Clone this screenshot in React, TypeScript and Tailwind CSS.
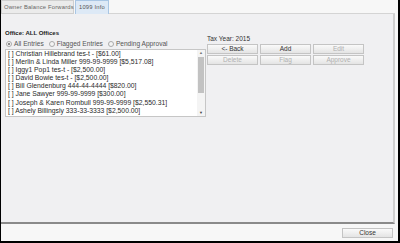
import React from "react"

const entries = [
  "[ ] Christian Hillebrand tes-t - [$61.00]",
  "[ ] Merlin & Linda Miller 999-99-9999 [$5,517.08]",
  "[ ] Iggy1 Pop1 tes-t - [$2,500.00]",
  "[ ] David Bowie tes-t - [$2,500.00]",
  "[ ] Bill Glendenburg 444-44-4444 [$820.00]",
  "[ ] Jane Sawyer 999-99-9999 [$300.00]",
  "[ ] Joseph & Karen Rombull 999-99-9999 [$2,550.31]",
  "[ ] Ashely Billingsly 333-33-3333 [$2,500.00]",
]

function Radio({ label, checked }: { label: string; checked?: boolean }) {
  return (
    <label className="flex items-center gap-[2px] text-[#555]">
      <span className="w-[6px] h-[6px] rounded-full border border-[#aaa] bg-[#f4f4f4] flex items-center justify-center">
        {checked && <span className="w-[2px] h-[2px] rounded-full bg-[#666]" />}
      </span>
      {label}
    </label>
  )
}

function Btn({ label, disabled }: { label: string; disabled?: boolean }) {
  return (
    <button
      className={`w-[51px] h-[10px] border border-[#c4c4c4] bg-gradient-to-b from-[#fafafa] to-[#e4e4e4] leading-[8px] text-[6.5px] ${
        disabled ? "text-[#b0b0b0]" : "text-[#333]"
      }`}
    >
      {label}
    </button>
  )
}

export default function App() {
  return (
    <div
      className="w-[400px] h-[243px] flex flex-col bg-[#f7f7f7] border-l border-r-2 border-b-2 border-black text-[6.5px] text-[#222]"
      style={{ fontFamily: "'Liberation Sans', Arial, sans-serif" }}
    >
      {/* Tabs */}
      <div className="h-[14px] flex items-stretch shrink-0">
        <div className="w-[73px] border border-[#cfcfcf] bg-[#ebebeb] text-[#666] flex items-center pl-[2px] text-[5.8px] tracking-[0.2px] whitespace-nowrap">
          Owner Balance Forwards
        </div>
        <div className="w-[34px] ml-[1px] border border-b-0 border-[#a9c6e4] bg-[#dde9f6] text-[#555] flex items-center pl-[3px] text-[5.8px] tracking-[0.2px] whitespace-nowrap">
          1099 Info
        </div>
        <div className="flex-1 mr-[3px] border-b border-[#d4d4d4]" />
      </div>

      {/* Panel */}
      <div className="flex-1 mr-[3px] bg-[#f0f0f2] border-r-2 border-[#cfcfcf] border-b-2 border-b-[#8a8a8a] pt-[15px] pl-[4px]">
        <div className="h-[9px] leading-[8px] font-bold text-[6px] text-[#222]">Office: ALL Offices</div>
        <div className="flex">
          <div className="w-[201px] flex flex-col">
            <div className="h-[11px] flex items-center gap-[5px] pl-[1px] pt-[1px] text-[6.6px]">
              <Radio label="All Entries" checked />
              <Radio label="Flagged Entries" />
              <Radio label="Pending Approval" />
            </div>
            <div className="h-[68px] border border-[#c6c6c6] bg-white flex">
              <div className="flex-1 pl-[2px] text-[6.8px] leading-[8.1px] text-[#2a2a2a]">
                {entries.map((e) => (
                  <div key={e} className="whitespace-nowrap">{e}</div>
                ))}
              </div>
              <div className="w-[8px] bg-[#f4f4f4] flex flex-col items-center">
                <div className="h-[6px] flex items-center text-[4px] text-[#777]">▲</div>
                <div className="w-[6px] h-[36px] mt-[1px] bg-[#c2c2c2]" />
                <div className="flex-1" />
                <div className="h-[6px] flex items-center text-[4px] text-[#444]">▼</div>
              </div>
            </div>
          </div>
          <div className="ml-[1px] -mt-[2px] flex flex-col">
            <div className="h-[6px] leading-[6px] text-[6.5px] text-[#333]">Tax Year: 2015</div>
            <div className="mt-[2px] flex flex-col gap-[1px]">
              <div className="flex gap-[2px]">
                <Btn label="<- Back" />
                <Btn label="Add" />
                <Btn label="Edit" disabled />
              </div>
              <div className="flex gap-[2px]">
                <Btn label="Delete" disabled />
                <Btn label="Flag" disabled />
                <Btn label="Approve" disabled />
              </div>
            </div>
          </div>
        </div>
      </div>

      {/* Footer */}
      <div className="h-[17px] shrink-0 flex items-start justify-end pr-[5px] pt-[4px]">
        <Btn label="Close" />
      </div>
    </div>
  )
}
